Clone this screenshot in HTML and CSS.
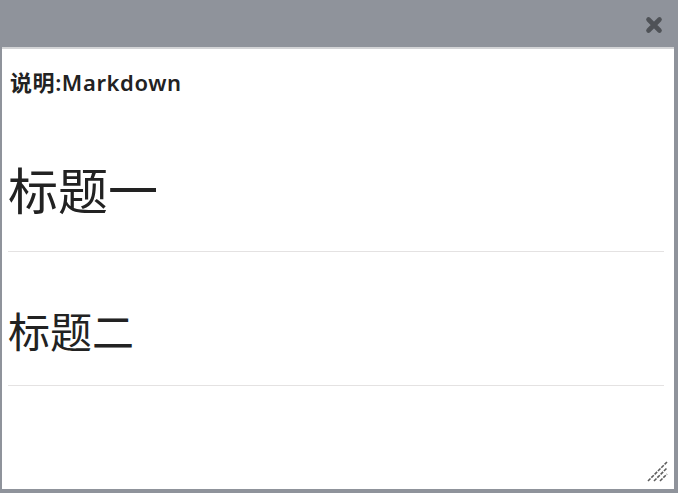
FILE: index.html
```html
<!DOCTYPE html>
<html>
<head>
<meta charset="utf-8">
<link rel="stylesheet" href="styles.css">
</head>
<body>
<div class="dialog">
  <div class="titlebar">
    <span class="close" aria-label="close">
      <svg width="18" height="18" viewBox="0 0 18 18"><path d="M3.5 3.5 L14.5 14.5 M14.5 3.5 L3.5 14.5" stroke="#4f5257" stroke-width="4.6" stroke-linecap="round" fill="none"/></svg>
    </span>
  </div>
  <div class="content">
    <p class="desc">说明:Markdown</p>
    <h1 class="h1">标题一</h1>
    <h2 class="h2">标题二</h2>
  </div>
  <span class="grip">
    <svg width="24" height="24" viewBox="0 0 24 24"><g stroke="#5e5e5e" stroke-width="1.6" stroke-dasharray="3.5 1.2"><line x1="2" y1="22" x2="21" y2="3"/><line x1="8" y1="22" x2="21" y2="9"/><line x1="14" y1="22" x2="21" y2="15"/></g></svg>
  </span>
  <span class="tick"></span>
</div>
</body>
</html>
```

FILE: styles.css
```css
html, body {
  margin: 0;
  padding: 0;
  background: #ffffff;
}
.dialog {
  position: relative;
  width: 678px;
  height: 493px;
  box-sizing: border-box;
  background: #ffffff;
  border-left: 2px solid #8f939b;
  border-right: 4px solid #8f939b;
  border-bottom: 4px solid #8f939b;
  display: flex;
  flex-direction: column;
  font-family: "Open Sans", "Noto Sans CJK SC", sans-serif;
  color: #222;
  overflow: hidden;
}
.titlebar {
  height: 47px;
  background: #8f939b;
  border-bottom: 2px solid #d3d4d6;
  display: flex;
  justify-content: flex-end;
  align-items: center;
  padding-right: 11px;
}
.close {
  display: flex;
  width: 18px;
  height: 18px;
  margin-top: 2px;
}
.content {
  padding: 0 10px 0 6px;
}
.desc {
  margin: 21px 0 0 2px;
  font-size: 22px;
  line-height: 24px;
  font-weight: 600;
  letter-spacing: 0.6px;
  color: #222;
  font-family: "Noto Sans", "Noto Sans CJK SC", sans-serif;
}
.h1 {
  margin: 65px 0 0 0;
  font-size: 50px;
  line-height: 58px;
  font-weight: 400;
  padding-bottom: 34px;
  border-bottom: 1px solid #e4e2e2;
  font-family: "Noto Sans CJK SC", sans-serif;
}
.h2 {
  margin: 53px 0 0 0;
  font-size: 42px;
  line-height: 50px;
  font-weight: 400;
  padding-bottom: 30px;
  border-bottom: 1px solid #e4e2e2;
  font-family: "Noto Sans CJK SC", sans-serif;
}
.grip {
  position: absolute;
  right: 4px;
  bottom: 6px;
  width: 24px;
  height: 24px;
}
.tick {
  position: absolute;
  left: -2px;
  top: 263px;
  width: 2px;
  height: 3px;
  background: #555;
}
```
